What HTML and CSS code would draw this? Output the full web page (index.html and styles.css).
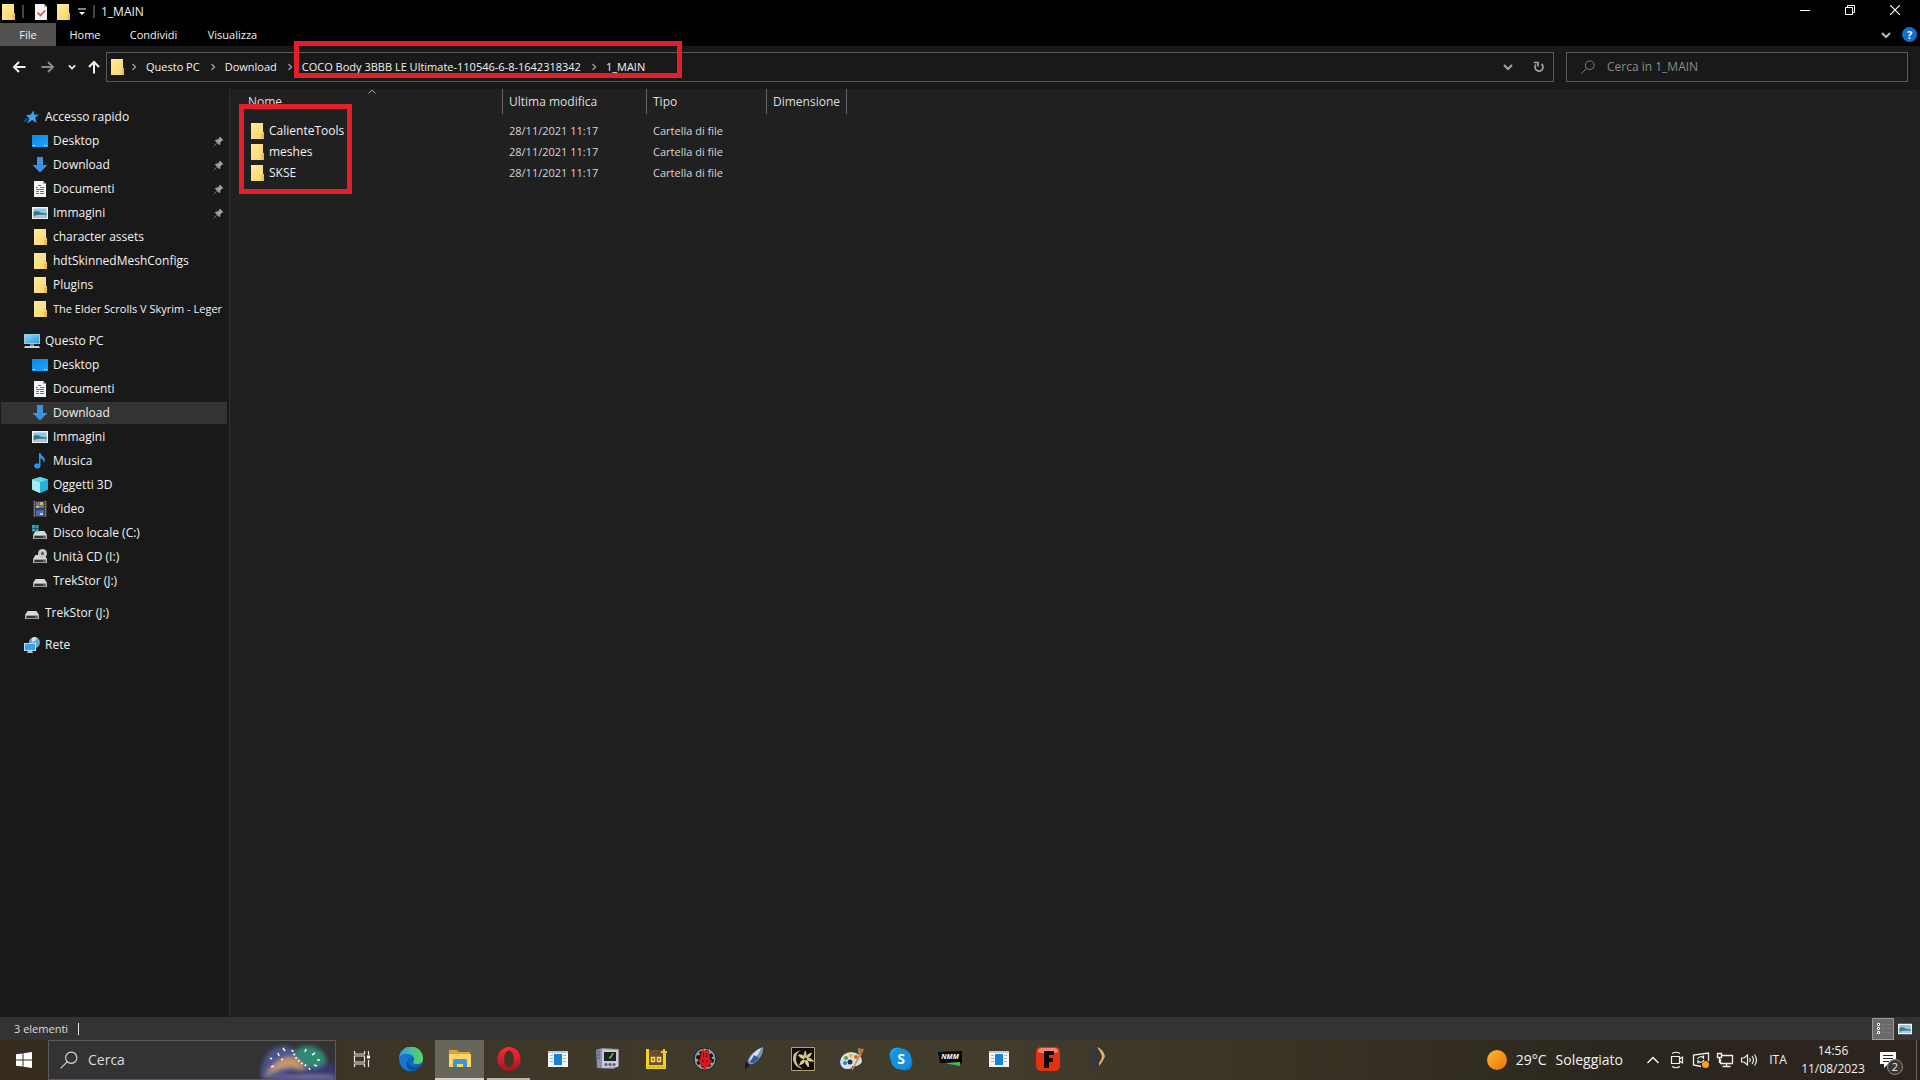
FILE: index.html
```html
<!DOCTYPE html>
<html lang="it">
<head>
<meta charset="utf-8">
<title>1_MAIN</title>
<link rel="stylesheet" href="styles.css">
</head>
<body>
<svg class="sprite" aria-hidden="true">
  <defs>
    <linearGradient id="g-folder" x1="0" y1="0" x2="1" y2="1"><stop offset="0" stop-color="#ffeaa0"/><stop offset="1" stop-color="#fbd666"/></linearGradient>
    <linearGradient id="g-desk" x1="0" y1="0" x2="1" y2="1"><stop offset="0" stop-color="#0a84e8"/><stop offset="1" stop-color="#1ea6ff"/></linearGradient>
    <linearGradient id="g-screen" x1="0" y1="0" x2="1" y2="1"><stop offset="0" stop-color="#8fd6fa"/><stop offset="1" stop-color="#2a9be4"/></linearGradient>
    <linearGradient id="g-sun" x1="0" y1="0" x2="1" y2="1"><stop offset="0" stop-color="#fbb92e"/><stop offset="1" stop-color="#f0700e"/></linearGradient>
    <linearGradient id="g-edge" x1="0" y1="0" x2="1" y2="0"><stop offset="0" stop-color="#2a9fe0"/><stop offset="1" stop-color="#5fd65a"/></linearGradient>
    <linearGradient id="g-opera" x1="0" y1="0" x2="0" y2="1"><stop offset="0" stop-color="#fb2c3a"/><stop offset="1" stop-color="#b0101c"/></linearGradient>
  </defs>
  <symbol id="folder" viewBox="0 0 16 16"><path d="M2 0h12v9.500h1V16H2z" fill="url(#g-folder)"/><path d="M12.500 10.500q1.500-.500 1.500-2l1 .800V16h-2.500z" fill="#e9bd4e"/></symbol>
  <symbol id="doc-check" viewBox="0 0 16 16"><path d="M2 0h9l3 3v13H2z" fill="#f4f4f4"/><path d="M11 0l3 3h-3z" fill="#b5b5b5"/><path d="M4.500 8.500l3 3 4.500-5" fill="none" stroke="#c8553a" stroke-width="1.600"/></symbol>
  <symbol id="star" viewBox="0 0 16 16"><path d="M9.500 1.500l.8 4.300 4.700-.3-3.800 3 1.300 5.500-4.300-3-5 3.500 2-5L2 6l4.500-.3z" fill="#35a6f0"/><path d="M1 10h3M0 12h3" stroke="#1e78bb" stroke-width="1"/></symbol>
  <symbol id="desktop" viewBox="0 0 16 16"><path d="M0 2h16v12H0z" fill="url(#g-desk)"/><path d="M1 12.500h2M12 12.500h1M14 12.500h1" stroke="#d8f0ff"/></symbol>
  <symbol id="download" viewBox="0 0 16 16"><path d="M5 0h6v8h4.500L8 15.500.500 8H5z" fill="#3a93dc"/></symbol>
  <symbol id="document" viewBox="0 0 16 16"><path d="M2 0h9l3 3v13H2z" fill="#f2f6f8"/><path d="M11 0l3 3h-3z" fill="#9aa5ab"/><path d="M4 6.500h2M6 4.500h3M8 6.500h4M4 8.500h8M4 10.500h3M8 10.500h4M4 12.500h3M8 12.500h4" stroke="#2e88ad"/></symbol>
  <symbol id="picture" viewBox="0 0 16 16"><path d="M0 2h16v12H0z" fill="#f5f5f5"/><path d="M1.500 3.500h13v9h-13z" fill="#8cc5ea"/><path d="M1.500 7q4-2 6 0 4 2 7 1v4.500h-13z" fill="#3f7488"/><path d="M1.500 11q6-2 13-1v2.500h-13z" fill="#a9cdd9"/></symbol>
  <symbol id="pc" viewBox="0 0 16 16"><path d="M0 1h16v10H0z" fill="#9fc9df"/><path d="M1 2h14v8H1z" fill="url(#g-screen)"/><path d="M6 11h4v2H6z" fill="#7f8c93"/><path d="M1 13h14l1 2H0z" fill="#c9ced1"/></symbol>
  <symbol id="music" viewBox="0 0 16 16"><path d="M7 0h1.500q.5 2.500 3 4 2.500 2.500.5 6.500.5-3.500-3.500-5V13a3.200 2.600 0 1 1-1.500-2.200z" fill="#2596e8"/></symbol>
  <symbol id="cube" viewBox="0 0 16 16"><path d="M8 0l8 2.500v10L8 16 0 12.500v-10z" fill="#3ec3e6"/><path d="M8 0l8 2.500L8 5.500 0 2.500z" fill="#5fd5ee"/><path d="M0 2.500l8 3V16l-8-3.500z" fill="#a6eef5"/><path d="M8 5.500l8-3v10L8 16z" fill="#25afd9"/></symbol>
  <symbol id="video" viewBox="0 0 16 16"><path d="M1 0h14v16H1z" fill="#3d3d3d"/><path d="M2.500 0v16M13.500 0v16" stroke="#a8a8a8" stroke-dasharray="1.300 1.300"/><path d="M4 1h8v6H4z" fill="#5a78b6"/><path d="M4 9h8v6H4z" fill="#4567c0"/><path d="M4 5h3v2H4zM8 1h3v3H8z" fill="#d6b25a"/><path d="M8 12h3v2H8z" fill="#b5c9ee"/></symbol>
  <symbol id="drive" viewBox="0 0 16 16"><path d="M3.500 6h9L15 10v4H1v-4z" fill="#d5d7d8"/><path d="M1.500 10h13v4h-13z" fill="#9a9d9f"/><path d="M2.500 11h11v2h-11z" fill="#303336"/><path d="M11 11.500h1.500v1H11z" fill="#6fe08a"/></symbol>
  <symbol id="drive-c" viewBox="0 0 16 16"><use href="#drive"/><path d="M0 0h3v3H0zM3.500 0h3v3h-3zM0 3.500h3v3H0zM3.500 3.500h3v3h-3z" fill="#29a7c2"/></symbol>
  <symbol id="drive-cd" viewBox="0 0 16 16"><use href="#drive"/><circle cx="10.500" cy="4.500" r="4.500" fill="#c5c8ca"/><circle cx="10.500" cy="4.500" r="1.500" fill="#55585a"/></symbol>
  <symbol id="network" viewBox="0 0 16 16"><circle cx="10.500" cy="5.500" r="5.500" fill="#65a9d4"/><path d="M8 1q3-2 5 0l-2 3-3 1z" fill="#cfe4ee"/><path d="M0 6h12v8H0z" fill="#b7ddf1"/><path d="M1 7h10v6H1z" fill="#38a3ea"/><path d="M4 14h4v1h1v1H3v-1h1z" fill="#b9c4ca"/></symbol>
  <symbol id="pin" viewBox="0 0 12 12"><path d="M7.500.500l4 4-1 .5-.5-.2L8 7q.3 2-.8 3L4.800 7.700.700 11.500.500 11.300l3.800-4.100L2 4.800q1-1.100 3-.8l2.200-2L7 1.500z" fill="#9b9fa3"/></symbol>
  <symbol id="chev-r" viewBox="0 0 8 8"><path d="M2.500 1l3 3-3 3" fill="none" stroke="currentColor" stroke-width="1.400"/></symbol>
  <symbol id="chev-d" viewBox="0 0 10 10"><path d="M1 3l4 4 4-4" fill="none" stroke="currentColor" stroke-width="2"/></symbol>
  <symbol id="arrow" viewBox="0 0 14 14"><path d="M13.500 7H2M7 2L2 7l5 5" fill="none" stroke="currentColor" stroke-width="2"/></symbol>
  <symbol id="lens" viewBox="0 0 16 16"><circle cx="10" cy="6" r="5" fill="none" stroke="currentColor"/><path d="M6.300 9.700L.5 15.500" stroke="currentColor"/></symbol>
  <symbol id="app-window" viewBox="0 0 24 24"><path d="M2 4h20v16H2z" fill="#f1f5f7"/><path d="M2 4h20v2H2z" fill="#c3ccd2"/><path d="M8 7h8v11H8z" fill="#1781d8"/><path d="M4 8.500h3M4 11.500h3M4 14.500h3M17 8.500h3M17 11.500h3M17 14.500h3" stroke="#a9b4bb"/></symbol>
</svg>

<div class="window">
  <header class="titlebar">
    <svg class="i16"><use href="#folder"/></svg>
    <span class="sep"></span>
    <button class="quick quick-doc" aria-label="Proprietà"><svg class="i16"><use href="#doc-check"/></svg></button>
    <button class="quick" aria-label="Nuova cartella"><svg class="i16"><use href="#folder"/></svg></button>
    <button class="quick quick-more" aria-label="Personalizza"><svg width="8" height="8" viewBox="0 0 8 8"><path d="M0 1h8" stroke="#fff"/><path d="M1 4h6L4 7z" fill="#fff"/></svg></button>
    <span class="sep"></span>
    <h1>1_MAIN</h1>
    <div class="controls">
      <button aria-label="Riduci a icona"><svg width="10" height="10" viewBox="0 0 10 10"><path d="M0 5.500h10" stroke="#fff"/></svg></button>
      <button aria-label="Ripristina"><svg width="10" height="10" viewBox="0 0 10 10"><path d="M.5 2.500h7v7h-7zM2.500 2.500v-2h7v7h-2" fill="none" stroke="#fff"/></svg></button>
      <button aria-label="Chiudi"><svg width="10" height="10" viewBox="0 0 10 10"><path d="M0 0l10 10M10 0L0 10" stroke="#fff" stroke-width="1.200"/></svg></button>
    </div>
  </header>

  <nav class="tabs">
    <button class="tab file">File</button>
    <button class="tab home">Home</button>
    <button class="tab">Condividi</button>
    <button class="tab">Visualizza</button>
    <div class="tabs-end">
      <button aria-label="Espandi barra multifunzione"><svg class="i10 soft"><use href="#chev-d"/></svg></button>
      <button class="help" aria-label="Guida">?</button>
    </div>
  </nav>

  <div class="navbar">
    <div class="history">
      <button aria-label="Indietro"><svg class="i14"><use href="#arrow"/></svg></button>
      <button class="forward" aria-label="Avanti"><svg class="i14 flip"><use href="#arrow"/></svg></button>
      <button class="recent" aria-label="Percorsi recenti"><svg class="i8"><use href="#chev-d"/></svg></button>
      <button aria-label="Livello superiore"><svg class="i14 up"><use href="#arrow"/></svg></button>
    </div>
    <div class="address">
      <svg class="i16"><use href="#folder"/></svg>
      <svg class="crumb-sep first"><use href="#chev-r"/></svg>
      <a href="#pc">Questo PC</a>
      <svg class="crumb-sep"><use href="#chev-r"/></svg>
      <a href="#download">Download</a>
      <svg class="crumb-sep"><use href="#chev-r"/></svg>
      <a href="#coco">COCO Body 3BBB LE Ultimate-110546-6-8-1642318342</a>
      <svg class="crumb-sep"><use href="#chev-r"/></svg>
      <a href="#main">1_MAIN</a>
      <div class="address-end">
        <button aria-label="Percorsi precedenti"><svg class="i10"><use href="#chev-d"/></svg></button>
        <button aria-label="Aggiorna"><svg width="12" height="12" viewBox="0 0 12 12"><path d="M8.500 3A4 4 0 1 1 3 3.500M1 1.500h4v4" fill="none" stroke="#a5a5a5" stroke-width="1.700"/></svg></button>
      </div>
      <div class="mark mark-path"></div>
    </div>
    <label class="search"><svg class="i14"><use href="#lens"/></svg><input type="text" placeholder="Cerca in 1_MAIN" aria-label="Cerca in 1_MAIN"></label>
  </div>

  <div class="body">
    <aside class="tree">
      <ul>
        <li><a class="root" href="#q"><svg class="i16"><use href="#star"/></svg><span>Accesso rapido</span></a></li>
        <li><a href="#q1"><svg class="i16"><use href="#desktop"/></svg><span>Desktop</span><svg class="pin"><use href="#pin"/></svg></a></li>
        <li><a href="#q2"><svg class="i16"><use href="#download"/></svg><span>Download</span><svg class="pin"><use href="#pin"/></svg></a></li>
        <li><a href="#q3"><svg class="i16"><use href="#document"/></svg><span>Documenti</span><svg class="pin"><use href="#pin"/></svg></a></li>
        <li><a href="#q4"><svg class="i16"><use href="#picture"/></svg><span>Immagini</span><svg class="pin"><use href="#pin"/></svg></a></li>
        <li><a href="#q5"><svg class="i16"><use href="#folder"/></svg><span>character assets</span></a></li>
        <li><a href="#q6"><svg class="i16"><use href="#folder"/></svg><span>hdtSkinnedMeshConfigs</span></a></li>
        <li><a href="#q7"><svg class="i16"><use href="#folder"/></svg><span>Plugins</span></a></li>
        <li><a class="long" href="#q8"><svg class="i16"><use href="#folder"/></svg><span>The Elder Scrolls V Skyrim - Leger</span></a></li>
      </ul>
      <ul>
        <li><a class="root" href="#p"><svg class="i16"><use href="#pc"/></svg><span>Questo PC</span></a></li>
        <li><a href="#p1"><svg class="i16"><use href="#desktop"/></svg><span>Desktop</span></a></li>
        <li><a href="#p2"><svg class="i16"><use href="#document"/></svg><span>Documenti</span></a></li>
        <li><a class="selected" href="#p3"><svg class="i16"><use href="#download"/></svg><span>Download</span></a></li>
        <li><a href="#p4"><svg class="i16"><use href="#picture"/></svg><span>Immagini</span></a></li>
        <li><a href="#p5"><svg class="i16"><use href="#music"/></svg><span>Musica</span></a></li>
        <li><a href="#p6"><svg class="i16"><use href="#cube"/></svg><span>Oggetti 3D</span></a></li>
        <li><a href="#p7"><svg class="i16"><use href="#video"/></svg><span>Video</span></a></li>
        <li><a href="#p8"><svg class="i16"><use href="#drive-c"/></svg><span>Disco locale (C:)</span></a></li>
        <li><a href="#p9"><svg class="i16"><use href="#drive-cd"/></svg><span>Unità CD (I:)</span></a></li>
        <li><a href="#p10"><svg class="i16"><use href="#drive"/></svg><span>TrekStor (J:)</span></a></li>
      </ul>
      <ul><li><a class="root" href="#t"><svg class="i16"><use href="#drive"/></svg><span>TrekStor (J:)</span></a></li></ul>
      <ul><li><a class="root" href="#r"><svg class="i16"><use href="#network"/></svg><span>Rete</span></a></li></ul>
    </aside>

    <main class="files">
      <table>
        <colgroup><col class="c-name"><col class="c-date"><col class="c-type"><col class="c-size"></colgroup>
        <thead>
          <tr>
            <th><div>Nome<svg class="sort" width="8" height="5" viewBox="0 0 8 5"><path d="M.5 4.500L4 1l3.500 3.500" fill="none" stroke="#aaa"/></svg></div></th>
            <th><div>Ultima modifica</div></th><th><div>Tipo</div></th><th><div>Dimensione</div></th>
          </tr>
        </thead>
        <tbody>
          <tr><td><div class="name"><svg class="i16"><use href="#folder"/></svg>CalienteTools</div></td><td>28/11/2021 11:17</td><td>Cartella di file</td><td></td></tr>
          <tr><td><div class="name"><svg class="i16"><use href="#folder"/></svg>meshes</div></td><td>28/11/2021 11:17</td><td>Cartella di file</td><td></td></tr>
          <tr><td><div class="name"><svg class="i16"><use href="#folder"/></svg>SKSE</div></td><td>28/11/2021 11:17</td><td>Cartella di file</td><td></td></tr>
        </tbody>
      </table>
      <div class="mark mark-files"></div>
    </main>
  </div>

  <footer class="status">
    <span class="count">3 elementi</span>
    <div class="views">
      <button class="view on" aria-label="Dettagli"><svg width="18" height="14" viewBox="0 0 18 14"><path d="M3.500 1.500h2v2h-2zM3.500 5.500h2v2h-2zM3.500 9.500h2v2h-2z" fill="#333" stroke="#fff"/><path d="M8 2.500h3M13 2.500h4M8 6.500h3M13 6.500h4M8 10.500h3M13 10.500h4" stroke="#7b7b7b"/></svg></button>
      <button class="view" aria-label="Icone grandi"><svg width="14" height="14" viewBox="0 0 16 16"><use href="#picture"/></svg></button>
    </div>
  </footer>
</div>

<div class="taskbar">
  <button class="start" aria-label="Start"><svg width="16" height="16" viewBox="0 0 16 16"><path d="M0 2.300l6.500-.9v6.100H0zM7.500 1.200L16 0v7.500H7.500zM0 8.500h6.500v6.100L0 13.700zM7.500 8.500H16V16l-8.500-1.200z" fill="#fff"/></svg></button>
  <label class="task-search">
    <svg class="i18"><use href="#lens"/></svg>
    <input type="text" placeholder="Cerca" aria-label="Cerca">
    <svg class="art" width="76" height="38" viewBox="0 0 76 38">
      <defs>
        <filter id="soft" x="-20%" y="-20%" width="140%" height="140%"><feGaussianBlur stdDeviation="2"/></filter>
      </defs>
      <g filter="url(#soft)">
        <path d="M2 38Q2 14 16 7q12-5 20 3 8-7 20-4 12 5 12 16-6 8-20 7-18-2-30 9z" fill="#4d5590"/>
        <path d="M35 12q6-9 20-6 12 5 12 15-8 7-18 4z" fill="#2f8a72"/>
        <path d="M6 36q8-16 22-20 10-2 16 10 8 4 14 1-8 6-18 1-14-6-34 8z" fill="#c39a68"/>
        <path d="M14 38q26-12 44-10 10-2 18-8v20z" fill="#35376d"/>
        <path d="M4 38q34-6 72-3v3z" fill="#7f78ad"/>
      </g>
      <path d="M13 18l-2-1M20 15l-1-3M26 10l-2-3M15 25l-3 1M22 19l2-1M46 11l1-3M53 14l3-2M58 19h3M55 24l3 1M50 27l1 2" stroke="#eef" stroke-width="1.600"/>
      <path d="M33 9l4 8 5 5 6 3" fill="none" stroke="#ffeed0" stroke-width="2" stroke-dasharray="2 2"/>
    </svg>
  </label>
  <div class="apps">
    <button class="app" aria-label="Visualizzazione attività"><svg width="18" height="18" viewBox="0 0 18 18"><path d="M1.500 1v3h10V1M1.500 17v-3h10v3M1.500 6h10v6h-10zM15.500 1v4M15.500 10v7" fill="none" stroke="#e8e8e8" stroke-width="1.200"/><path d="M14 5.500h3v3h-3z" fill="#fff"/></svg></button>
    <button class="app" aria-label="Edge"><svg class="i24" viewBox="0 0 24 24"><circle cx="12" cy="12" r="12" fill="#0f66b8"/><path d="M0 11A12 12 0 0 1 24 12q0 5-6 5-4 0-4-2 2-2 1-4-2-4-7-4-6 0-8 4z" fill="url(#g-edge)"/><path d="M0 11q3-4 8-4 5 1 6 3-4-1-5 3 0 6 6 7 4 0 7-2-4 6-10 6Q1 24 0 11z" fill="#1479cf"/><path d="M9 13q0 6 6 7 4 0 7-2l-3 4q-4 2-8 1-6-4-2-10z" fill="#0c4f9c"/></svg></button>
    <button class="app active" aria-label="Esplora file"><svg class="i24" viewBox="0 0 24 24"><path d="M1 3h8l2 2h11v4H1z" fill="#e2a32d"/><path d="M1 7h22v13H1z" fill="#fdd667"/><path d="M5 20v-6q0-2 2-2h10q2 0 2 2v6h-4v-3H9v3z" fill="#3f95d2"/></svg></button>
    <button class="app running" aria-label="Opera"><svg class="i24" viewBox="0 0 24 24"><path fill-rule="evenodd" d="M12 0a11.500 12 0 1 1 0 24a11.500 12 0 1 1 0-24zM12 3.500a5 8.500 0 1 0 0 17a5 8.500 0 1 0 0-17z" fill="url(#g-opera)"/></svg></button>
    <button class="app" aria-label="Applicazione"><svg class="i24"><use href="#app-window"/></svg></button>
    <button class="app" aria-label="Monitor"><svg class="i24" viewBox="0 0 24 24"><path d="M1 3l6-2 17 1v17l-6 3-16-1z" fill="#8d8ca9"/><path d="M7 2l16 1v17L7 21z" fill="#c8c7dc"/><path d="M9 5h12v9H9z" fill="#1c221f"/><path d="M14 11l2-1 2-4" fill="none" stroke="#5fd05b" stroke-width="1.500"/><path d="M2 5h3M2 8h3M2 11h3" stroke="#555477"/><circle cx="11" cy="17.500" r="1.500" fill="#59586f"/><circle cx="15" cy="17.500" r="1.500" fill="#59586f"/><circle cx="19" cy="17.500" r="1.500" fill="#59586f"/></svg></button>
    <button class="app" aria-label="LOOT"><svg class="i24" viewBox="0 0 24 24"><path d="M2 2h3v16h14V6h-2V4h2V2h2v2h2v2h-1v16H2z" fill="#f1d51c"/><path d="M5 3h14v15H5z" fill="#6c4c2b"/><path d="M7.500 10.500h3v4h-3zM13.500 10.500h3v4h-3z" fill="none" stroke="#f4e24b" stroke-width="1.500"/><path d="M17 5h6M20 2v16" stroke="#f1d51c" stroke-width="2"/><path d="M3 20h18" stroke="#c9ac12"/></svg></button>
    <button class="app" aria-label="Wrye Bash"><svg class="i24" viewBox="0 0 24 24"><circle cx="12" cy="12" r="11" fill="#8ea3a2" stroke="#1a1a18"/><circle cx="12" cy="12" r="7" fill="#171313"/><circle cx="12" cy="12" r="7.500" fill="none" stroke="#171313" stroke-width="3" stroke-dasharray="3.400 2.500"/><path d="M10 1l1 3h2l1-3 2 5 1 6 2 2-2 2-1 4-2-1-1 4h-2l-1-4-2 1-1-4-2-2 2-2 1-6z" fill="#db1522"/><path d="M10.500 6v4M13.500 6v4M9 13l2 2M15 13l-2 2" stroke="#220a0a" stroke-width="1"/></svg></button>
    <button class="app" aria-label="Editor"><svg class="i24" viewBox="0 0 24 24"><path d="M3 16l5-2-1 5-4 4z" fill="#181b20"/><path d="M21 0q1 7-5 13-4 5-9 4-3-2 1-8Q14 2 21 0z" fill="#7d92b9"/><path d="M19 1q-9 4-12 13l3-1Q17 8 19 1z" fill="#dbe5ee"/><path d="M12 8l5 3-5 5-4-1z" fill="#315b9e"/></svg></button>
    <button class="app" aria-label="Creation Kit"><svg class="i24" viewBox="0 0 24 24"><path d="M.5.500h23v23H.500z" fill="#0b0a06" stroke="#b1a371"/><path d="M10 3Q1 5 2 13q2 8 10 9-7-4-7-10 0-6 5-9z" fill="#cbbd83"/><path d="M14.500 12q-3-4 0-8 1 4 0 8zM14.500 12q1-5 6-6-1 4-6 6zM14.500 12q5-2 8 2-4 1-8-2zM14.500 12q4 3 3 8-4-3-3-8zM14.500 12q-1 5-6 6 1-5 6-6zM14.500 12q-5 0-7-4 5-1 7 4z" fill="#d6c98e" stroke="#d6c98e"/><circle cx="14.500" cy="12" r="1.500" fill="#2a2410"/></svg></button>
    <button class="app" aria-label="Paint"><svg class="i24" viewBox="0 0 24 24"><path d="M11 5Q1 6 0 15q1 8 9 7 4-1 3-3 7 1 10-4 0-9-11-10z" fill="#cfe2ee"/><circle cx="6" cy="11" r="2" fill="#5a9e3f"/><circle cx="11" cy="8.500" r="2" fill="#e5c13c"/><circle cx="16" cy="10" r="2" fill="#d9632f"/><circle cx="5" cy="16" r="2" fill="#3d78bd"/><circle cx="10" cy="15" r="2.500" fill="#2b3340"/><path d="M20 6l-8 17 9-15z" fill="#d99548" stroke="#d99548"/><path d="M18 1l6 1-1 3-2 3-3-2z" fill="#b47743"/></svg></button>
    <button class="app" aria-label="Skype"><svg class="i24" viewBox="0 0 24 24"><circle cx="8" cy="8" r="7.500" fill="#1aa3ea"/><circle cx="16" cy="16" r="7.500" fill="#0f7fd0"/><circle cx="12" cy="12" r="10.500" fill="#1591dd"/><text x="12" y="17" text-anchor="middle" class="skype">S</text></svg></button>
    <button class="app" aria-label="NMM"><svg class="i24" viewBox="0 0 24 24"><path d="M0 5l24-1v12l-3 1L2 16z" fill="#060606"/><path d="M6 16l16-1 0 4z" fill="#38c24d"/><text x="12" y="12" text-anchor="middle" class="nmm">NMM</text></svg></button>
    <button class="app" aria-label="Applicazione"><svg class="i24"><use href="#app-window"/></svg></button>
    <button class="app" aria-label="FontForge"><svg class="i24" viewBox="0 0 24 24"><rect width="24" height="24" rx="5" fill="#e2320f"/><path d="M2 5q0-4 4-4h12q4 0 4 4-10 3-20 0z" fill="#f38672"/><path d="M8 4h10v4h-5v3h4v4h-4v6H8z" fill="#120604"/></svg></button>
    <button class="app" aria-label="Strumento"><svg class="i24" viewBox="0 0 24 24"><path d="M5 5l6-2 3 7-2 11-7-3z" fill="#36373c"/><path d="M12 0q6 2 8 9-1 4-6 10v-3q3-4 3-7-2-5-5-9z" fill="#d6b468"/></svg></button>
  </div>
  <div class="tray">
    <button class="weather"><svg width="20" height="20" viewBox="0 0 20 20"><circle cx="10" cy="10" r="10" fill="url(#g-sun)"/></svg><span>29°C</span><span>Soleggiato</span></button>
    <button class="tray-icon" aria-label="Icone nascoste"><svg width="14" height="14" viewBox="0 0 14 14"><path d="M1.500 10L7 4.500l5.500 5.500" fill="none" stroke="#fff" stroke-width="1.300"/></svg></button>
    <button class="tray-icon" aria-label="Riunione"><svg width="14" height="18" viewBox="0 0 14 18"><path d="M1.500 5.500h8v7h-8zM9.500 8l3-2v6l-3-2M2 2.500q4-2.500 8 0M2 15.500q4 2.500 8 0" fill="none" stroke="#f0f0f0" stroke-width="1.200"/></svg></button>
    <button class="tray-icon" aria-label="Aggiornamenti"><svg width="18" height="18" viewBox="0 0 18 18"><path d="M9 15.500l-7.500-1.500V4l15-2v8" fill="none" stroke="#f0f0f0" stroke-width="1.300"/><path d="M5.500 8q3-4 6-1V4.500M12 9q-3 4-6 1v2.500" fill="none" stroke="#f0f0f0" stroke-width="1.200"/><circle cx="13.500" cy="13.500" r="3.500" fill="#f7a01d"/></svg></button>
    <button class="tray-icon" aria-label="Rete"><svg width="18" height="18" viewBox="0 0 18 18"><path d="M6 4.500h10.500v8H4.500V8M1.500 2.500h4v4h-4zM3.500 6.500V12M10.500 12.500v3M6.500 15.500h8" fill="none" stroke="#f0f0f0" stroke-width="1.300"/></svg></button>
    <button class="tray-icon" aria-label="Volume"><svg width="18" height="18" viewBox="0 0 18 18"><path d="M1.500 7h2.500l3.500-3v10L4 11H1.500zM9.500 7q1.500 2 0 4M12 5q3 4 0 8M14.500 3.500q4 5.500 0 11" fill="none" stroke="#f0f0f0" stroke-width="1.200"/></svg></button>
    <button class="lang">ITA</button>
    <button class="clock"><time>14:56</time><time>11/08/2023</time></button>
    <button class="notify" aria-label="Centro notifiche"><svg width="26" height="26" viewBox="0 0 26 26"><path d="M1 5h16v12H9l-4 4v-4H1z" fill="#fff"/><path d="M4 8.500h10M4 11.500h10M4 14.500h6" stroke="#2b261e" stroke-width="1.200"/></svg><span class="badge">2</span></button>
  </div>
</div>
</body>
</html>
```
FILE: styles.css
```css
* { box-sizing: border-box; }

body {
  margin: 0;
  min-height: 100vh;
  display: flex;
  flex-direction: column;
  background: #191919;
  color: #f2f2f2;
  font: 12px/16px "Open Sans", "Noto Sans", sans-serif;
  overflow: hidden;
}

button {
  display: flex;
  align-items: center;
  justify-content: center;
  padding: 0;
  border: 0;
  background: none;
  color: inherit;
  font: inherit;
}

a { color: inherit; text-decoration: none; }
svg { flex: none; }
input { min-width: 0; border: 0; padding: 0; background: none; color: inherit; font: inherit; outline: 0; }
input::placeholder { color: inherit; opacity: 1; }

.sprite { position: absolute; width: 0; height: 0; }
.i8 { width: 8px; height: 8px; }
.i10 { width: 10px; height: 10px; }
.i14 { width: 14px; height: 14px; }
.i16 { width: 16px; height: 16px; }
.i18 { width: 18px; height: 18px; }
.i24 { width: 24px; height: 24px; }
.soft { color: #bbb; }
.flip { transform: scaleX(-1); }
.up { transform: rotate(90deg); }

.window { flex: 1; display: flex; flex-direction: column; }

/* Title bar */
.titlebar { display: flex; align-items: center; height: 23px; background: #000; }
.sep { width: 2px; height: 13px; margin-left: 6px; background: #444; }
.quick-doc { margin-left: 9px; }
.quick { margin-right: 6px; }
.quick-more { width: 10px; margin-right: 0; }
.titlebar h1 { margin: 0 0 0 6px; font-size: 12px; font-weight: 400; }
.controls { display: flex; margin-left: auto; padding-right: 3px; align-self: stretch; }
.controls button { width: 45px; height: 20px; }

/* Ribbon tabs */
.tabs { display: flex; height: 23px; background: #000; font-size: 11px; }
.tab { min-width: 79px; }
.tab.file { min-width: 56px; background: #545250; }
.tab.home { min-width: 58px; }
.tabs-end { display: flex; align-items: center; gap: 11px; margin-left: auto; padding-right: 3px; }
.help { width: 15px; height: 15px; border-radius: 50%; background: #0e6fd0; color: #fff; font-weight: 700; }

/* Address row */
.navbar { display: flex; gap: 12px; height: 43px; padding: 6px 12px 7px 12px; }
.history { display: flex; align-items: center; gap: 15px; width: 82px; }
.history .forward { color: #8a8a8a; }
.history .recent { margin: 0 -4px 0 -2px; }
.address {
  position: relative;
  flex: 1;
  display: flex;
  align-items: center;
  padding-left: 2px;
  border: 1px solid #5a5a5a;
}
.address a { font-size: 11px; }
.crumb-sep { width: 8px; height: 8px; margin: 0 8px 0 9px; color: #9a9a9a; }
.crumb-sep.first { margin-left: 5px; }
.address-end { display: flex; gap: 20px; margin-left: auto; padding-right: 8px; color: #a5a5a5; }
.search { display: flex; align-items: center; gap: 12px; width: 342px; padding-left: 14px; border: 1px solid #5a5a5a; color: #8b8b8b; }
.search input { flex: 1; }

/* Annotation rectangles */
.mark { position: absolute; border: 5px solid #e0202b; pointer-events: none; }
.mark-path { left: 187px; top: -12px; width: 388px; height: 37px; }
.mark-files { left: 9px; top: 15px; width: 113px; height: 90px; }

/* Navigation tree */
.body { flex: 1; display: flex; background: #202020; }
.tree { width: 230px; padding-top: 16px; border-right: 1px solid #2d2d2d; background: #191919; }
.tree ul { margin: 0 0 8px; padding: 0; list-style: none; }
.tree a { display: flex; align-items: center; gap: 5px; height: 22px; margin: 1px 2px 1px 1px; padding-left: 31px; }
.tree li { display: flow-root; }
.tree .root { padding-left: 23px; }
.tree .long { font-size: 11px; }
.tree .selected { background: #333; }
.tree a span { flex: 1; overflow: hidden; white-space: nowrap; }
.pin { width: 11px; height: 11px; margin-right: 3px; color: #9b9fa3; }

/* File list */
.files { position: relative; flex: 1; }
table { width: 617px; border-collapse: collapse; table-layout: fixed; }
.c-name { width: 273px; }
.c-date { width: 144px; }
.c-type { width: 120px; }
.c-size { width: 80px; }
th { height: 31px; padding: 0; vertical-align: top; text-align: left; font-weight: 400; color: #dedede; }
th div { position: relative; display: flex; align-items: center; height: 25px; padding-left: 6px; border-right: 1px solid #636363; }
th:first-child div { padding-left: 18px; }
.sort { position: absolute; left: 138px; top: 0; }
td { height: 21px; padding: 0 0 0 6px; color: #d5d5d5; font-size: 11px; white-space: nowrap; }
.name { display: flex; align-items: center; gap: 4px; padding-left: 13px; color: #f2f2f2; font-size: 12px; }

/* Status bar */
.status { display: flex; align-items: center; height: 23px; padding: 0 4px 0 14px; background: #333; color: #dedede; font-size: 11px; }
.count { padding-right: 10px; border-right: 1px solid #e6e6e6; line-height: 12px; }
.views { display: flex; margin-left: auto; }
.view { width: 22px; height: 22px; }
.view.on { border: 1px solid #999; background: #6b6b6b; }

/* Taskbar */
.taskbar { display: flex; height: 40px; background: linear-gradient(90deg, #352c1e, #3d372a 25%, #423d2d 50%, #332e21 75%, #2a261e 85%, #2d241e); }
.start { width: 48px; }
.task-search { display: flex; align-items: center; width: 288px; padding-left: 11px; border: 1px solid #605d58; background: #333; color: #dcdcdc; }
.task-search input { flex: 1; padding-left: 10px; font-size: 14px; line-height: 20px; }
.apps { display: flex; padding-left: 1px; }
.app { width: 49px; height: 40px; border-bottom: 2px solid transparent; }
.app.active { background: #68655b; border-color: #d6d0c8; }
.app.running { border-image: linear-gradient(90deg, transparent 5px, #b9b4ac 5px, #b9b4ac 44px, transparent 44px) 2; }
.skype { font: 700 14px "Open Sans", sans-serif; fill: #fff; }
.nmm { font: italic 700 7px "Open Sans", sans-serif; fill: #fff; }
.tray { display: flex; margin-left: auto; padding-right: 3px; }
.weather { gap: 9px; margin-right: 18px; font-size: 14px; }
.tray-icon { width: 24px; }
.lang { width: 34px; }
.clock { flex-direction: column; gap: 2px; width: 76px; }
.notify { position: relative; justify-content: flex-start; width: 46px; padding-left: 8px; border-right: 1px solid #6b665f; }
.badge { position: absolute; left: 16px; top: 19px; width: 16px; height: 16px; border: 1px solid #8d8a85; border-radius: 50%; background: #3a3733; font-size: 11px; line-height: 14px; }
```
